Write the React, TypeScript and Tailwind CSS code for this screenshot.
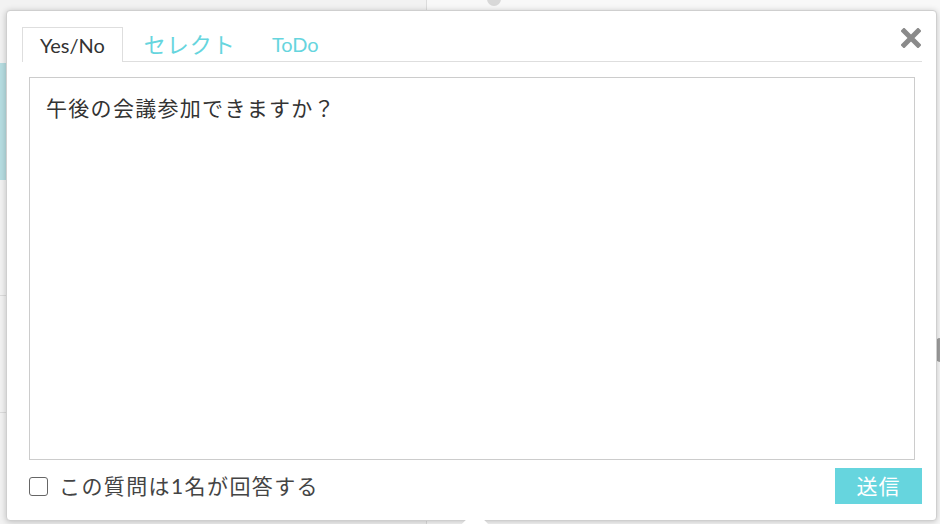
import React from "react";

const jp = "font-['Lato','Noto_Sans_CJK_JP',sans-serif]";

function CloseIcon() {
  return (
    <svg width="20" height="20" viewBox="0 0 20 20">
      <path d="M3 3 L17 17 M17 3 L3 17" stroke="#8a8a8a" strokeWidth="5" strokeLinecap="square" />
    </svg>
  );
}

export default function App() {
  return (
    <div className={`${jp} relative w-[940px] h-[524px] overflow-hidden bg-[#f6f6f6]`}>
      {/* page behind the popup */}
      <div className="flex h-full">
        <div className="w-[427px] h-full bg-[#f2f2f2] border-r border-[#dcdcdc] flex flex-col">
          <div className="h-[63px]" />
          <div className="h-[117px] bg-[#b6dde1]" />
          <div className="h-[116px] border-b border-[#dcdcdc]" />
          <div className="h-[117px] border-b border-[#dcdcdc]" />
        </div>
        <div className="flex-1 h-full bg-[#f8f8f8] relative">
          <div className="absolute left-[60px] -top-[8px] w-[14px] h-[14px] rounded-full bg-[#d8d8d8]" />
          <div className="absolute right-0 top-[338px] w-[5px] h-[24px] rounded-l-full bg-[#a0a0a0]" />
        </div>
      </div>

      {/* popup */}
      <div className="absolute left-[6px] top-[10px] w-[931px] h-[511px] bg-white border border-[#cfcfcf] rounded-[4px] shadow-[0_1px_6px_rgba(0,0,0,0.22)] pl-[15px] pr-[14px] pt-[16px] flex flex-col">
        <div className="flex items-end border-b border-[#dedede] h-[35px] relative">
          <div className="h-[35px] px-[17px] border border-b-0 border-[#dedede] bg-white -mb-px flex items-center text-[20px] text-[#333]">
            Yes/No
          </div>
          <div className="h-[34px] pl-[21px] pr-[18px] flex items-center text-[22px] text-[#66d5de] tracking-[1px]">
            セレクト
          </div>
          <div className="h-[34px] px-[18px] flex items-center text-[20px] text-[#66d5de]">
            ToDo
          </div>
          <div className="absolute right-[1px] top-[1px]">
            <CloseIcon />
          </div>
        </div>

        <div className="mx-[7px] mt-[15px] h-[383px] border border-[#cccccc] px-[16px] pt-[14px] text-[21px] text-[#333] tracking-[1.3px]">
          午後の会議参加できますか？
        </div>

        <div className="flex items-center justify-between mt-[8px]">
          <label className="flex items-center ml-[7px] text-[21px] text-[#444] tracking-[1.4px]">
            <span className="w-[19px] h-[19px] border-[1.5px] border-[#666] rounded-[3px] bg-white mr-[11px]" />
            この質問は1名が回答する
          </label>
          <button className="w-[87px] h-[36px] bg-[#66d5de] text-white text-[21px] tracking-[1px]">
            送信
          </button>
        </div>

        <div className="absolute left-[458px] -bottom-[15px] w-[20px] h-[20px] rotate-45 bg-white border-r border-b border-[#cfcfcf]" />
      </div>
    </div>
  );
}
